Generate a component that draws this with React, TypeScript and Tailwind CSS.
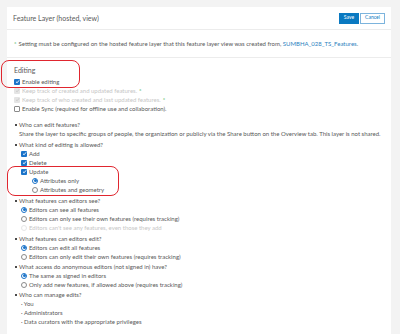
import React from 'react';

const Check: React.FC<{ state: 'on' | 'off' | 'dim' }> = ({ state }) => {
    if (state === 'off') {
        return <span className="inline-block w-[6px] h-[6px] border border-[#8a8a8a] bg-white rounded-[1px] shrink-0" />;
    }
    const bg = state === 'on' ? 'bg-[#1a73c9]' : 'bg-[#e4e4e4]';
    const stroke = state === 'on' ? '#ffffff' : '#c8c8c8';
    return (
        <span className={`inline-flex items-center justify-center w-[6px] h-[6px] rounded-[1px] shrink-0 ${bg}`}>
            <svg width="5" height="5" viewBox="0 0 10 10">
                <path d="M2 5.5 L4.2 7.6 L8.2 2.6" fill="none" stroke={stroke} strokeWidth="1.8" />
            </svg>
        </span>
    );
};

const Radio: React.FC<{ state: 'on' | 'off' | 'dim' }> = ({ state }) => {
    if (state === 'on') {
        return (
            <span className="inline-flex items-center justify-center w-[6px] h-[6px] rounded-full border border-[#1a73c9] bg-white shrink-0">
                <span className="w-[3px] h-[3px] rounded-full bg-[#1a73c9]" />
            </span>
        );
    }
    const border = state === 'off' ? 'border-[#8a8a8a]' : 'border-[#e6e6e6]';
    return <span className={`inline-block w-[6px] h-[6px] rounded-full border bg-white shrink-0 ${border}`} />;
};

const Row: React.FC<{ children: React.ReactNode; className?: string }> = ({ children, className = '' }) => (
    <div className={`flex items-center h-[9px] ${className}`}>{children}</div>
);

const Heading: React.FC<{ text: string; className?: string }> = ({ text, className = '' }) => (
    <Row className={`pl-[8px] ${className}`}>
        <span className="w-[2px] h-[2px] bg-[#4a4a4a] mr-[2px]" />
        <span>{text}</span>
    </Row>
);

const Opt: React.FC<{ kind: 'check' | 'radio'; state: 'on' | 'off' | 'dim'; label: string; deep?: boolean }> = ({
    kind,
    state,
    label,
    deep,
}) => (
    <Row className={deep ? 'pl-[25px]' : 'pl-[14px]'}>
        {kind === 'check' ? <Check state={state} /> : <Radio state={state} />}
        <span className={`ml-[2px] ${state === 'dim' ? 'text-[#c6c6c6]' : ''}`}>{label}</span>
    </Row>
);

export default function App() {
    return (
        <div
            className="w-[400px] h-[334px] bg-[#f3f3f3] pl-[7px] pt-[7px] overflow-hidden text-[#585858]"
            style={{ fontFamily: 'Lato, "Liberation Sans", sans-serif' }}
        >
            <div className="relative w-[384px] h-[340px] bg-white">
                {/* header */}
                <div className="flex items-center justify-between h-[23px] pl-[6px] pr-[6px] border-b border-[#ececec]">
                    <span className="text-[7px] text-[#5a5a5a]">Feature Layer (hosted, view)</span>
                    <div className="flex gap-[1px]">
                        <button className="w-[20px] h-[11px] bg-[#0a79c1] text-white text-[5px]">Save</button>
                        <button className="w-[25px] h-[11px] bg-white border border-[#7cb4dd] text-[#0a79c1] text-[5px]">
                            Cancel
                        </button>
                    </div>
                </div>

                {/* note */}
                <div className="flex items-center h-[28px] pl-[7px] border-b border-[#ececec] text-[6px]">
                    <span className="text-[#35ac46] mr-[2px]">*</span>
                    <span>
                        Setting must be configured on the hosted feature layer that this feature layer view was
                        created from, <span className="text-[#2d7fc0]">SUMBHA_028_TS_Features</span>.
                    </span>
                </div>

                {/* content */}
                <div className="pt-[8px] text-[6px] leading-[9px]">
                    <Row className="pl-[7px] text-[7px] text-[#5a5a5a]">Editing</Row>
                    <Row className="pl-[7px] mt-[2px]">
                        <Check state="on" />
                        <span className="ml-[2px]">Enable editing</span>
                    </Row>
                    <Row className="pl-[7px]">
                        <Check state="dim" />
                        <span className="ml-[2px] text-[#c6c6c6]">Keep track of created and updated features.</span>
                        <span className="ml-[2px] text-[#35ac46]">*</span>
                    </Row>
                    <Row className="pl-[7px]">
                        <Check state="dim" />
                        <span className="ml-[2px] text-[#c6c6c6]">Keep track of who created and last updated features.</span>
                        <span className="ml-[2px] text-[#35ac46]">*</span>
                    </Row>
                    <Row className="pl-[7px]">
                        <Check state="off" />
                        <span className="ml-[2px]">Enable Sync (required for offline use and collaboration).</span>
                    </Row>

                    <Heading text="Who can edit features?" className="mt-[7px]" />
                    <Row className="pl-[12px]">
                        Share the layer to specific groups of people, the organization or publicly via the Share button on
                        the Overview tab. This layer is not shared.
                    </Row>

                    <Heading text="What kind of editing is allowed?" className="mt-[2px]" />
                    <Opt kind="check" state="on" label="Add" />
                    <Opt kind="check" state="on" label="Delete" />
                    <Opt kind="check" state="on" label="Update" />
                    <Opt kind="radio" state="on" label="Attributes only" deep />
                    <Opt kind="radio" state="off" label="Attributes and geometry" deep />

                    <Heading text="What features can editors see?" className="mt-[2px]" />
                    <Opt kind="radio" state="on" label="Editors can see all features" />
                    <Opt kind="radio" state="off" label="Editors can only see their own features (requires tracking)" />
                    <Opt kind="radio" state="dim" label="Editors can't see any features, even those they add" />

                    <Heading text="What features can editors edit?" className="mt-[2px]" />
                    <Opt kind="radio" state="on" label="Editors can edit all features" />
                    <Opt kind="radio" state="off" label="Editors can only edit their own features (requires tracking)" />

                    <Heading text="What access do anonymous editors (not signed in) have?" className="mt-[1px]" />
                    <Opt kind="radio" state="on" label="The same as signed in editors" />
                    <Opt kind="radio" state="off" label="Only add new features, if allowed above (requires tracking)" />

                    <Heading text="Who can manage edits?" className="mt-[1px]" />
                    <Row className="pl-[14px]">· You</Row>
                    <Row className="pl-[14px]">· Administrators</Row>
                    <Row className="pl-[14px]">· Data curators with the appropriate privileges</Row>
                </div>

                {/* red annotation outlines */}
                <div className="absolute left-[-6px] top-[53px] w-[79px] h-[28px] border-[1.5px] border-[#e0262f] rounded-[8px]" />
                <div className="absolute left-[0px] top-[159px] w-[112px] h-[30px] border-[1.5px] border-[#e0262f] rounded-[8px]" />
            </div>
        </div>
    );
}
